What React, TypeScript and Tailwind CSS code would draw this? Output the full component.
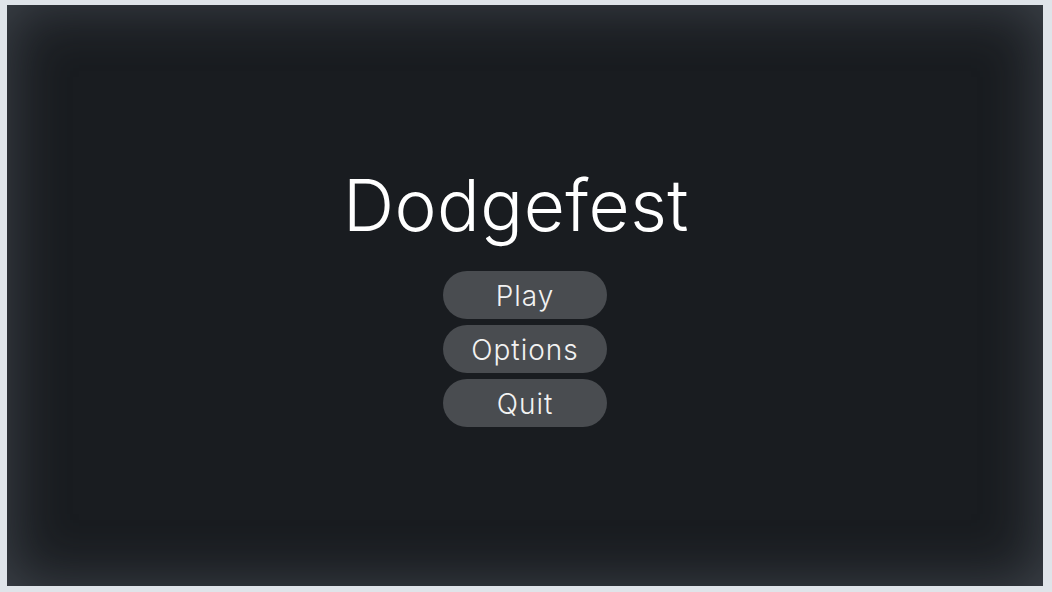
export default function App() {
  const items = ['Play', 'Options', 'Quit'];

  return (
    <div className="h-[592px] w-[1052px] bg-[#dfe4e9] pt-[5px] pl-[7px] pr-[9px] pb-[6px]">
      <div
        className="flex h-full w-full flex-col items-center bg-[#191c20] pt-[155px] shadow-[inset_0_0_60px_rgba(110,120,130,0.45)]"
        style={{ fontFamily: 'Inter, "Open Sans", sans-serif' }}
      >
        <h1 className="mr-[18px] text-[71px] leading-[90px] font-light tracking-[0.5px] text-white">
          Dodgefest
        </h1>
        <div className="mt-[21px] flex flex-col gap-[6px]">
          {items.map((label) => (
            <button
              key={label}
              className="flex h-[48px] w-[164px] items-center justify-center rounded-full bg-[#494c50] pt-[2px] text-[28px] font-light tracking-[1px] text-[#f2f2f2]"
            >
              {label}
            </button>
          ))}
        </div>
      </div>
    </div>
  );
}
